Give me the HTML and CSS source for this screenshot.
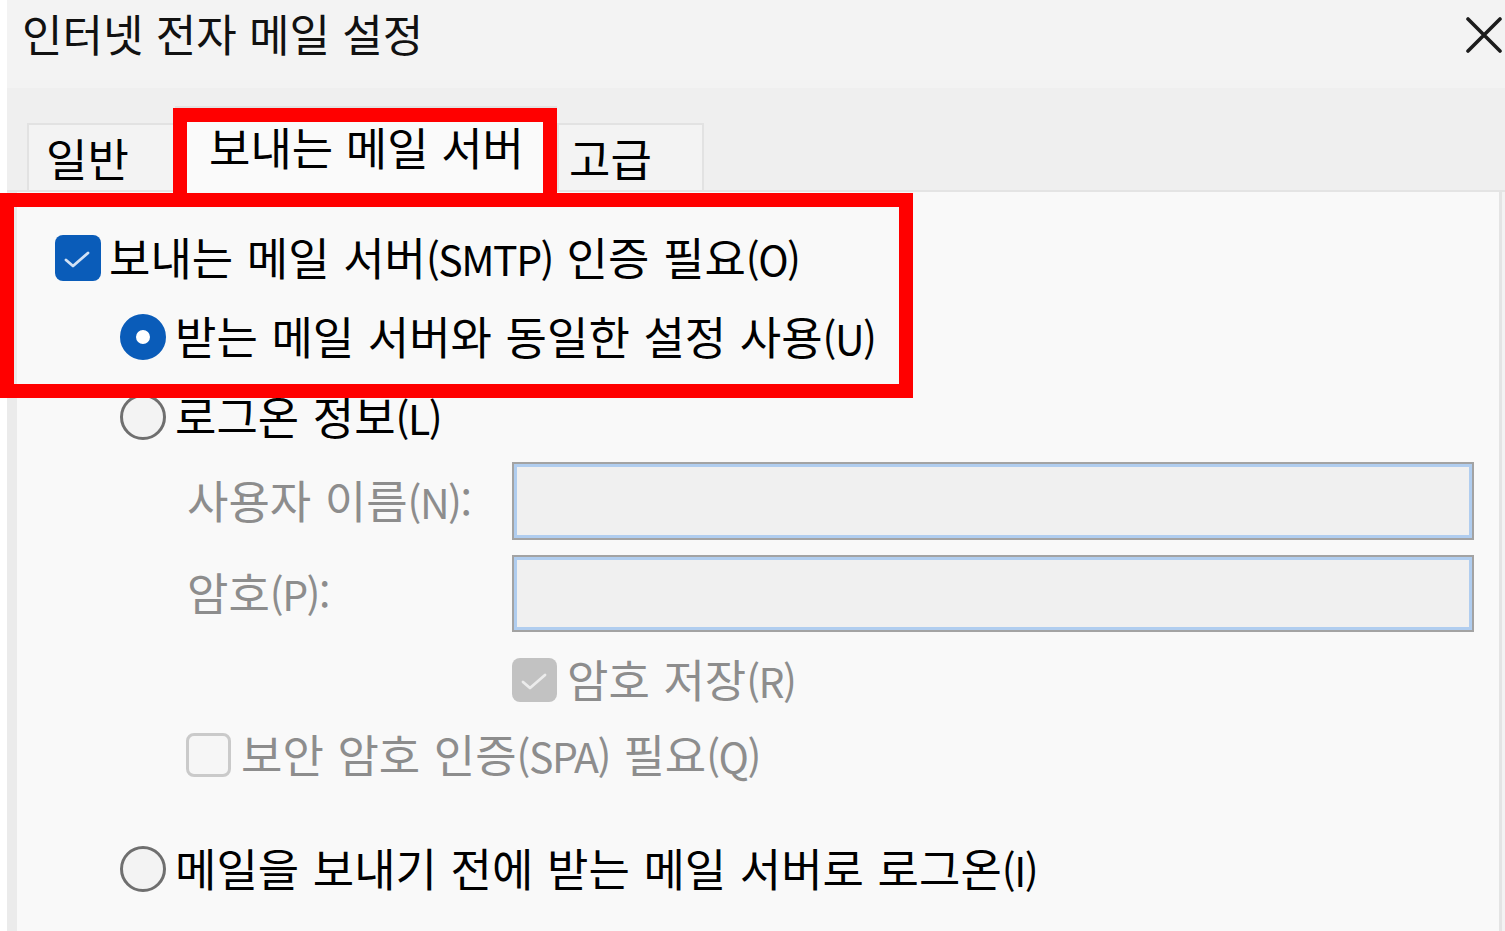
FILE: index.html
```html
<!DOCTYPE html>
<html lang="ko">
<head>
<meta charset="utf-8">
<title>인터넷 전자 메일 설정</title>
<link rel="stylesheet" href="styles.css">
</head>
<body>
<div class="dialog">
  <div class="titlebar">
    <div class="title">인터넷 전자 메일 설정</div>
    <svg class="close" width="36" height="36" viewBox="0 0 36 36"><path d="M2 2 L34 34 M34 2 L2 34" stroke="#1c1c1c" stroke-width="3.6" stroke-linecap="round"/></svg>
  </div>
  <div class="tabstrip">
    <div class="tab tab-general">일반</div>
    <div class="tab tab-active">보내는 메일 서버</div>
    <div class="tab tab-adv">고급</div>
  </div>
  <div class="panel">
    <div class="row row1">
      <span class="cb cb-on"><svg width="46" height="46" viewBox="0 0 46 46"><path d="M11 25 L18 31 L33 18" fill="none" stroke="#d2e2f5" stroke-width="2.8" stroke-linecap="round" stroke-linejoin="round"/></svg></span>
      <span class="lbl lbl-cb">보내는 메일 서버<span class="lat">(SMTP)</span> 인증 필요<span class="lat">(O)</span></span>
    </div>
    <div class="row row2 indent1">
      <span class="radio radio-on"></span>
      <span class="lbl lbl-radio">받는 메일 서버와 동일한 설정 사용<span class="lat">(U)</span></span>
    </div>
    <div class="row row3 indent1">
      <span class="radio"></span>
      <span class="lbl lbl-radio">로그온 정보<span class="lat">(L)</span></span>
    </div>
    <div class="field row4">
      <span class="lbl dis">사용자 이름<span class="lat">(N):</span></span>
      <span class="input"></span>
    </div>
    <div class="field row5">
      <span class="lbl dis">암호<span class="lat">(P):</span></span>
      <span class="input"></span>
    </div>
    <div class="row row6 indent3">
      <span class="cb cb-dis-on"><svg width="45" height="44" viewBox="0 0 45 44"><path d="M11 24 L18 30 L33 17" fill="none" stroke="#ececec" stroke-width="2.8" stroke-linecap="round" stroke-linejoin="round"/></svg></span>
      <span class="lbl dis lbl-cb2">암호 저장<span class="lat">(R)</span></span>
    </div>
    <div class="row row7 indent2">
      <span class="cb cb-dis-off"></span>
      <span class="lbl dis lbl-cb2">보안 암호 인증<span class="lat">(SPA)</span> 필요<span class="lat">(Q)</span></span>
    </div>
    <div class="row row8 indent1">
      <span class="radio"></span>
      <span class="lbl lbl-radio">메일을 보내기 전에 받는 메일 서버로 로그온<span class="lat">(I)</span></span>
    </div>
  </div>
</div>
<div class="mark mark-tab"></div>
<div class="mark mark-auth"></div>
</body>
</html>
```
FILE: styles.css
```css
html, body {
  margin: 0;
  padding: 0;
  width: 1505px;
  height: 931px;
  overflow: hidden;
  background: #ffffff;
  font-family: "Noto Sans CJK KR", "Noto Sans", sans-serif;
  color: #000;
}
body { position: relative; }

.dialog {
  margin-left: 7px;
  width: 1498px;
  height: 931px;
  display: flex;
  flex-direction: column;
  background: #f3f3f3;
}

.titlebar {
  height: 88px;
  flex: none;
  display: flex;
  justify-content: space-between;
  align-items: flex-start;
  padding: 8px 3px 0 15px;
  box-sizing: border-box;
  background: #f3f3f3;
}
.title {
  font-size: 44px;
  line-height: 50px;
  word-spacing: 0;
  color: #111;
}
.close { margin-top: 9px; }

.tabstrip {
  height: 104px;
  flex: none;
  display: flex;
  align-items: flex-end;
  padding-left: 20px;
  box-sizing: border-box;
  background: #efefef;
  border-bottom: 2px solid #e4e4e4;
}
.tab {
  font-size: 45px;
  line-height: 1;
  box-sizing: border-box;
  background: #f3f3f3;
  border: 2px solid #e2e2e2;
  border-bottom: none;
  display: flex;
  align-items: center;
  height: 67px;
  padding-bottom: 0;
}
.tab-general { width: 148px; padding-left: 17px; }
.tab-active {
  width: 382px;
  padding-left: 32px;
  padding-bottom: 8px;
  background: #fafafa;
  margin-bottom: -2px;
  height: 86px;
}
.tab-adv { width: 147px; padding-left: 10px; }

.panel {
  flex: 1;
  background: #f9f9f9;
  border-left: 10px solid #ebebeb;
  border-right: 3px solid #e4e4e4;
  margin-right: 3px;
  display: flex;
  flex-direction: column;
  padding-top: 42px;
}

.row {
  display: flex;
  align-items: center;
  flex: none;
}
.lbl {
  font-size: 45px;
  line-height: 1;
  word-spacing: 1px;
  white-space: nowrap;
  position: relative;
  top: -2px;
}
.lat {
  font-size: 41px;
  letter-spacing: -1.5px;
}
.dis { color: #8d8d8d; }

.row1 { padding-left: 38px; height: 48px; }
.lbl-cb { margin-left: 8px; }

.indent1 { padding-left: 103px; }
.indent2 { padding-left: 169px; }
.indent3 { padding-left: 495px; }

.row2 { margin-top: 32px; height: 46px; }
.row3 { margin-top: 34px; height: 46px; }
.lbl-radio { margin-left: 9px; }

.cb {
  box-sizing: border-box;
  width: 46px;
  height: 46px;
  border-radius: 8px;
  flex: none;
  display: block;
}
.cb svg { display: block; }
.cb-on { background: #0a5cb9; }
.cb-dis-on { background: #c2c2c2; width: 45px; height: 44px; }
.cb-dis-off { width: 45px; height: 44px; border: 3px solid #cacaca; background: #f6f6f6; }
.lbl-cb2 { margin-left: 10px; }

.radio {
  box-sizing: border-box;
  width: 46px;
  height: 46px;
  border-radius: 50%;
  border: 3px solid #6f6f6f;
  background: #f3f3f3;
  flex: none;
}
.radio-on {
  border: 16px solid #0a5cb9;
  background: #ffffff;
}

.field {
  display: grid;
  grid-template-columns: 325px 962px;
  align-items: center;
  padding-left: 170px;
  flex: none;
}
.row4 { margin-top: 22px; }
.row5 { margin-top: 15px; }
.input {
  box-sizing: border-box;
  height: 78px;
  background: #f0f0f0;
  border: 2px solid #a3a3a3;
  box-shadow: inset 0 0 0 3px #b0cdef;
}
.row5 .input { height: 77px; }

.row6 { margin-top: 26px; height: 44px; }
.row7 { margin-top: 31px; height: 44px; }
.row8 { margin-top: 69px; height: 46px; }

.mark {
  position: absolute;
  border: 14px solid #ff0000;
  box-sizing: border-box;
  pointer-events: none;
}
.mark-tab { left: 173px; top: 108px; width: 384px; height: 99px; }
.mark-auth { left: 0; top: 193px; width: 913px; height: 205px; }
```
